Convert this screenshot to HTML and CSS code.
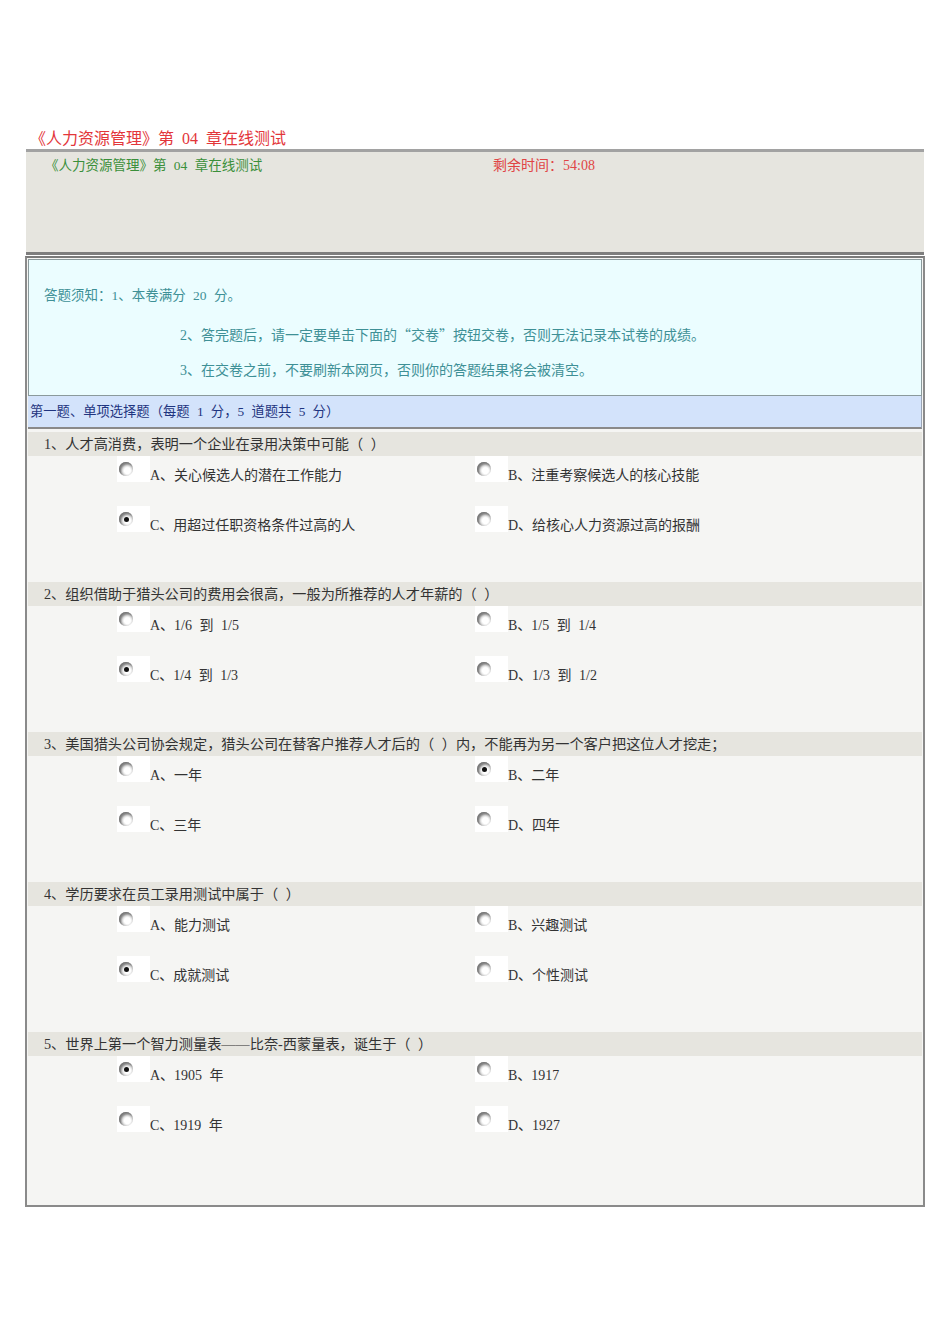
FILE: index.html
```html
<!DOCTYPE html>
<html lang="zh-CN">
<head>
<meta charset="utf-8">
<title>《人力资源管理》第04章在线测试</title>
<link rel="stylesheet" href="styles.css">
</head>
<body>
<div class="page">
  <h1 class="title">《人力资源管理》第 04 章在线测试</h1>
  <div class="head">
    <div class="head-name">《人力资源管理》第 04 章在线测试</div>
    <div class="head-time">剩余时间：54:08</div>
  </div>
  <div class="paper">
    <div class="notice">
      <p class="n1">答题须知：1、本卷满分 20 分。</p>
      <p class="n2">2、答完题后，请一定要单击下面的<span class="cjk">“</span>交卷<span class="cjk">”</span>按钮交卷，否则无法记录本试卷的成绩。</p>
      <p class="n2">3、在交卷之前，不要刷新本网页，否则你的答题结果将会被清空。</p>
    </div>
    <div class="section">第一题、单项选择题（每题 1 分，5 道题共 5 分）</div>

    <div class="q">
      <div class="q-title">1、人才高消费，表明一个企业在录用决策中可能（ ）</div>
      <div class="opts">
        <div class="opt"><span class="rbox"><span class="radio"></span></span><span class="otext">A、关心候选人的潜在工作能力</span></div>
        <div class="opt"><span class="rbox"><span class="radio"></span></span><span class="otext">B、注重考察候选人的核心技能</span></div>
        <div class="opt"><span class="rbox"><span class="radio on"></span></span><span class="otext">C、用超过任职资格条件过高的人</span></div>
        <div class="opt"><span class="rbox"><span class="radio"></span></span><span class="otext">D、给核心人力资源过高的报酬</span></div>
      </div>
    </div>

    <div class="q">
      <div class="q-title">2、组织借助于猎头公司的费用会很高，一般为所推荐的人才年薪的（ ）</div>
      <div class="opts">
        <div class="opt"><span class="rbox"><span class="radio"></span></span><span class="otext">A、1/6 到 1/5</span></div>
        <div class="opt"><span class="rbox"><span class="radio"></span></span><span class="otext">B、1/5 到 1/4</span></div>
        <div class="opt"><span class="rbox"><span class="radio on"></span></span><span class="otext">C、1/4 到 1/3</span></div>
        <div class="opt"><span class="rbox"><span class="radio"></span></span><span class="otext">D、1/3 到 1/2</span></div>
      </div>
    </div>

    <div class="q">
      <div class="q-title">3、美国猎头公司协会规定，猎头公司在替客户推荐人才后的（ ）内，不能再为另一个客户把这位人才挖走；</div>
      <div class="opts">
        <div class="opt"><span class="rbox"><span class="radio"></span></span><span class="otext">A、一年</span></div>
        <div class="opt"><span class="rbox"><span class="radio on"></span></span><span class="otext">B、二年</span></div>
        <div class="opt"><span class="rbox"><span class="radio"></span></span><span class="otext">C、三年</span></div>
        <div class="opt"><span class="rbox"><span class="radio"></span></span><span class="otext">D、四年</span></div>
      </div>
    </div>

    <div class="q">
      <div class="q-title">4、学历要求在员工录用测试中属于（ ）</div>
      <div class="opts">
        <div class="opt"><span class="rbox"><span class="radio"></span></span><span class="otext">A、能力测试</span></div>
        <div class="opt"><span class="rbox"><span class="radio"></span></span><span class="otext">B、兴趣测试</span></div>
        <div class="opt"><span class="rbox"><span class="radio on"></span></span><span class="otext">C、成就测试</span></div>
        <div class="opt"><span class="rbox"><span class="radio"></span></span><span class="otext">D、个性测试</span></div>
      </div>
    </div>

    <div class="q">
      <div class="q-title">5、世界上第一个智力测量表——比奈-西蒙量表，诞生于（ ）</div>
      <div class="opts">
        <div class="opt"><span class="rbox"><span class="radio on"></span></span><span class="otext">A、1905 年</span></div>
        <div class="opt"><span class="rbox"><span class="radio"></span></span><span class="otext">B、1917</span></div>
        <div class="opt"><span class="rbox"><span class="radio"></span></span><span class="otext">C、1919 年</span></div>
        <div class="opt"><span class="rbox"><span class="radio"></span></span><span class="otext">D、1927</span></div>
      </div>
    </div>
  </div>
</div>
</body>
</html>
```
FILE: styles.css
```css
* { box-sizing: border-box; }
html, body { margin: 0; padding: 0; background: #ffffff; }
body {
  font-family: "Liberation Serif", "Noto Sans CJK SC", serif;
  color: #333333;
  word-spacing: 0.25em;
}
.cjk { font-family: "Noto Sans CJK SC", sans-serif; }
.page {
  padding: 0 25px;
  width: 950px;
}
.title {
  margin: 0;
  padding: 128px 0 0 5px;
  height: 149px;
  line-height: 21px;
  font-size: 16px;
  font-weight: normal;
  color: #e3363a;
}
.head {
  margin-left: 1px;
  width: 898px;
  height: 106px;
  border-top: 3px solid #a2a2a2;
  border-bottom: 3px solid #7e7e7e;
  background: #e6e5df;
  display: grid;
  grid-template-columns: 448px 1fr;
  align-items: start;
  padding: 5px 0 0 19px;
  font-size: 13.5px;
  line-height: 18px;
}
.head-name { color: #3a8f3a; }
.head-time { color: #e04545; font-size: 14px; }
.paper {
  margin-top: 1px;
  width: 900px;
  height: 951px;
  border: 2px solid #8a8a8a;
  border-top-color: #7a7a7a;
  padding: 1px;
  background: #f5f5f3;
}
.notice {
  height: 137px;
  border: 1px solid #8b9a9c;
  background: #ebfdff;
  padding: 26px 0 14px 15px;
  display: flex;
  flex-direction: column;
  gap: 17.5px;
  color: #3e9096;
  font-size: 14px;
}
.notice p { margin: 0; line-height: 20px; height: 20px; white-space: nowrap; }
.notice .n1 { font-size: 13.5px; }
.notice .n2 { padding-left: 136px; }
.section {
  height: 33px;
  background: #d3e3fb;
  border-bottom: 2px solid #8a8a8a;
  border-right: 1px solid #9aa4b4;
  padding-left: 2px;
  line-height: 31px;
  font-size: 13.3px;
  color: #1f3580;
}
.section + .q { margin-top: 3px; }
.q-title {
  height: 24px;
  line-height: 24px;
  background: #e6e5df;
  padding-left: 16px;
  font-size: 14.2px;
  color: #333333;
  white-space: nowrap;
}
.opts {
  height: 126px;
  display: grid;
  grid-template-columns: 358px 1fr;
  grid-auto-rows: 50px;
  padding-left: 89px;
}
.opt {
  display: flex;
  align-items: flex-start;
}
.rbox {
  width: 33px;
  height: 26px;
  background: #ffffff;
  flex: none;
  position: relative;
}
.radio {
  position: absolute;
  left: 2px;
  top: 6px;
  width: 14px;
  height: 14px;
  border-radius: 50%;
  background: radial-gradient(circle at 60% 62%, #ffffff 0 3px, #f0f0f0 4px, #d8d8d8 5px, #b0b0b0 6px, #8a8a8a 7px);
  box-shadow: inset 1px 1px 0 #7a7a7a;
}
.radio.on::after {
  content: "";
  position: absolute;
  left: 5px;
  top: 5px;
  width: 5px;
  height: 5px;
  border-radius: 50%;
  background: #111111;
}
.otext {
  margin-top: 11px;
  line-height: 18px;
  font-size: 14px;
  color: #333333;
  white-space: nowrap;
}
```
